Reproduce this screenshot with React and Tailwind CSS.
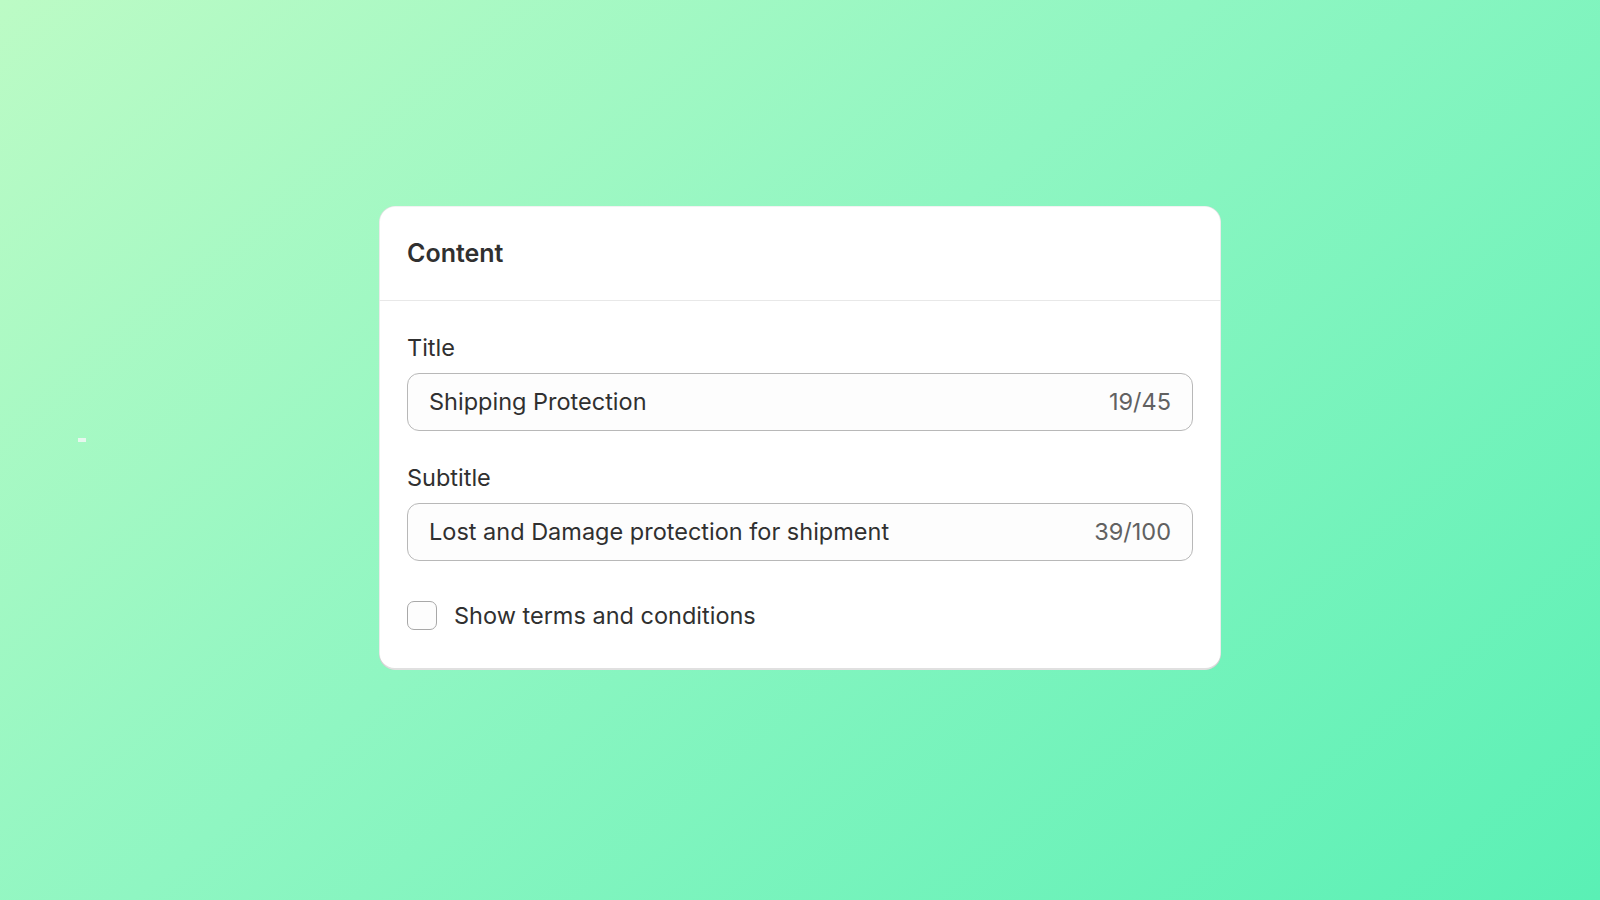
import React from 'react';

const Field = ({ label, value, count, className = '' }) => (
  <div className={className}>
    <label className="block text-[23.5px] leading-[28px] text-[#303030]">{label}</label>
    <div className="mt-[11px] h-[58px] rounded-[12px] border border-[#b8b8b8] bg-[#fdfdfd] px-[21px] flex items-center justify-between text-[23.5px] leading-[28px]">
      <span className="text-[#303030]">{value}</span>
      <span className="text-[#616161]">{count}</span>
    </div>
  </div>
);

const App = () => {
  return (
    <div
      className="relative min-h-screen w-full bg-[linear-gradient(140deg,#bcfbc5_0%,#8ff6c2_45%,#5af0b5_100%)] pt-[206px]"
      style={{ fontFamily: 'Inter, "Noto Sans", sans-serif' }}
    >
      <div className="absolute left-[78px] top-[438px] h-[4px] w-[8px] bg-[#e6f7ee]" />

      <div className="mx-auto w-[842px] rounded-[16px] bg-white shadow-[inset_0_-2px_0_0_rgba(0,0,0,0.12),inset_1px_0_0_0_rgba(0,0,0,0.08),inset_-1px_0_0_0_rgba(0,0,0,0.08),inset_0_1px_0_0_rgba(0,0,0,0.05)]">
        <div className="px-[28px] py-[31px] border-b border-[#e8e8e8]">
          <h2 className="text-[25px] leading-[32px] font-semibold text-[#303030]">Content</h2>
        </div>

        <div className="px-[28px] pt-[33px] pb-[40px]">
          <Field label="Title" value="Shipping Protection" count="19/45" />
          <Field
            className="mt-[33px]"
            label="Subtitle"
            value="Lost and Damage protection for shipment"
            count="39/100"
          />

          <label className="mt-[40px] flex items-center gap-[17px]">
            <span className="h-[29px] w-[30px] rounded-[7px] border border-[#a8a8a8] bg-[#fdfdfd]" />
            <span className="text-[23.5px] leading-[28px] text-[#303030]">Show terms and conditions</span>
          </label>
        </div>
      </div>
    </div>
  );
};

export default App;
